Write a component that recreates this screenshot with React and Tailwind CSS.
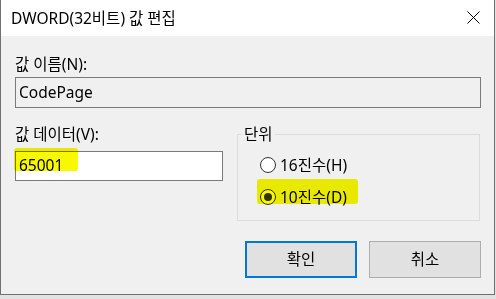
import React from "react";

const Radio = ({ checked, label }) => (
  <div className="flex items-center h-[20px] pl-[22px]">
    <span className="w-[16px] h-[16px] rounded-full border border-[#333] bg-white flex items-center justify-center">
      {checked && <span className="w-[8px] h-[8px] rounded-full bg-[#333]" />}
    </span>
    <span className="ml-[4px] leading-[20px]">{label}</span>
  </div>
);

export default function App() {
  return (
    <div className="w-[496px] h-[299px] bg-[#e2e2e2] font-['Noto_Sans','Noto_Sans_CJK_KR',sans-serif] text-[15.5px] text-black overflow-hidden">
      <div className="w-[495px] h-[295px] flex flex-col bg-[#f0f0f0] border-x border-b border-[#707070]">
        {/* title bar */}
        <div className="h-[36px] bg-white flex items-center justify-between pl-[10px] pr-[14px]">
          <span className="leading-[20px]">DWORD(32비트) 값 편집</span>
          <svg width="13" height="13" viewBox="0 0 13 13" className="mb-[1px]">
            <path d="M0.5 0.5L12.5 12.5M12.5 0.5L0.5 12.5" stroke="#000" strokeWidth="1" />
          </svg>
        </div>

        <div className="flex-1 pl-[14px] pr-[13px] pt-[18px]">
          <div className="leading-[20px]">값 이름(N):</div>
          <div className="mt-[3px] h-[31px] border border-[#7a7a7a] flex items-center pl-[3px]">
            CodePage
          </div>

          <div className="mt-[16px] flex">
            <div className="w-[208px]">
              <div className="leading-[20px]">값 데이터(V):</div>
              <div className="relative mt-[7px] h-[30px] bg-white border border-[#7a7a7a] flex items-center pl-[3px]">
                <span>65001</span>
                <div className="absolute left-[-2px] top-[-4px] w-[64px] h-[23px] bg-[#f8f800] rounded-[3px] mix-blend-multiply" />
              </div>
            </div>

            <fieldset className="ml-[14px] mr-[1px] flex-1 border border-[#dcdcdc] pb-[13px]">
              <legend className="ml-[4px] px-[2px] leading-[20px]">단위</legend>
              <div className="mt-[11px]">
                <Radio label="16진수(H)" />
              </div>
              <div className="relative mt-[12px]">
                <Radio checked label="10진수(D)" />
                <div className="absolute left-[19px] top-[-8px] w-[101px] h-[25px] bg-[#f8f800] rounded-[3px] mix-blend-multiply" />
              </div>
            </fieldset>
          </div>

          <div className="mt-[20px] flex justify-end gap-[12px]">
            <button className="w-[112px] h-[37px] bg-[#e1e1e1] border-2 border-[#0078d7]">확인</button>
            <button className="w-[112px] h-[37px] bg-[#e1e1e1] border border-[#adadad]">취소</button>
          </div>
        </div>
      </div>
    </div>
  );
}
